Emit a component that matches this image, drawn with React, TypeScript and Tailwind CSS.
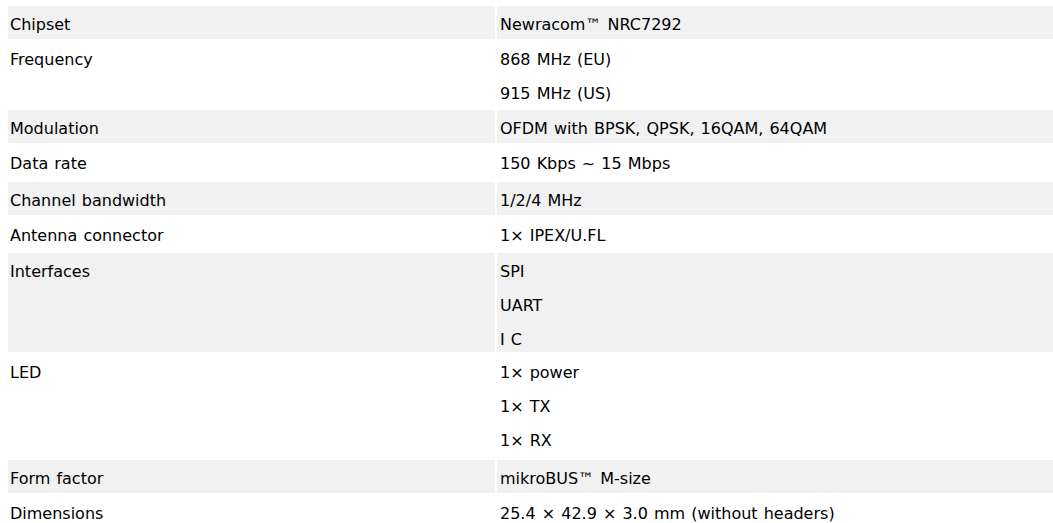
import React from "react";

type Row = { label: string; values: string[]; h: string; grey: boolean };

const rows: Row[] = [
  { label: "Chipset", values: ["Newracom™ NRC7292"], h: "h-[33px]", grey: true },
  { label: "Frequency", values: ["868 MHz (EU)", "915 MHz (US)"], h: "h-[67px]", grey: false },
  { label: "Modulation", values: ["OFDM with BPSK, QPSK, 16QAM, 64QAM"], h: "h-[33px]", grey: true },
  { label: "Data rate", values: ["150 Kbps ~ 15 Mbps"], h: "h-[35px]", grey: false },
  { label: "Channel bandwidth", values: ["1/2/4 MHz"], h: "h-[33px]", grey: true },
  { label: "Antenna connector", values: ["1× IPEX/U.FL"], h: "h-[34px]", grey: false },
  { label: "Interfaces", values: ["SPI", "UART", "I C"], h: "h-[99px]", grey: true },
  { label: "LED", values: ["1× power", "1× TX", "1× RX"], h: "h-[104px]", grey: false },
  { label: "Form factor", values: ["mikroBUS™ M-size"], h: "h-[33px]", grey: true },
  { label: "Dimensions", values: ["25.4 × 42.9 × 3.0 mm (without headers)"], h: "h-[35px]", grey: false },
];

export default function App() {
  return (
    <div
      className="w-[1053px] h-[523px] overflow-hidden bg-white text-black text-[16px] pt-[6px] pl-[8px] [word-spacing:1px]"
      style={{ fontFamily: '"DejaVu Sans", Verdana, sans-serif' }}
    >
      <div className="flex flex-col gap-[2px]">
        {rows.map((r) => (
          <div
            key={r.label}
            className={`grid grid-cols-[487px_1fr] grid-rows-1 gap-x-[2px] shrink-0 ${r.h}`}
          >
            <div className={`${r.grey ? "bg-[#f1f1f1]" : ""} pl-[2px] pt-[2px] min-h-0`}>
              <div className="leading-[34px] whitespace-nowrap">{r.label}</div>
            </div>
            <div className={`${r.grey ? "bg-[#f1f1f1]" : ""} pl-[3px] pt-[2px] min-h-0`}>
              {r.values.map((v) => (
                <div key={v} className="leading-[34px] whitespace-nowrap">
                  {v}
                </div>
              ))}
            </div>
          </div>
        ))}
      </div>
    </div>
  );
}
